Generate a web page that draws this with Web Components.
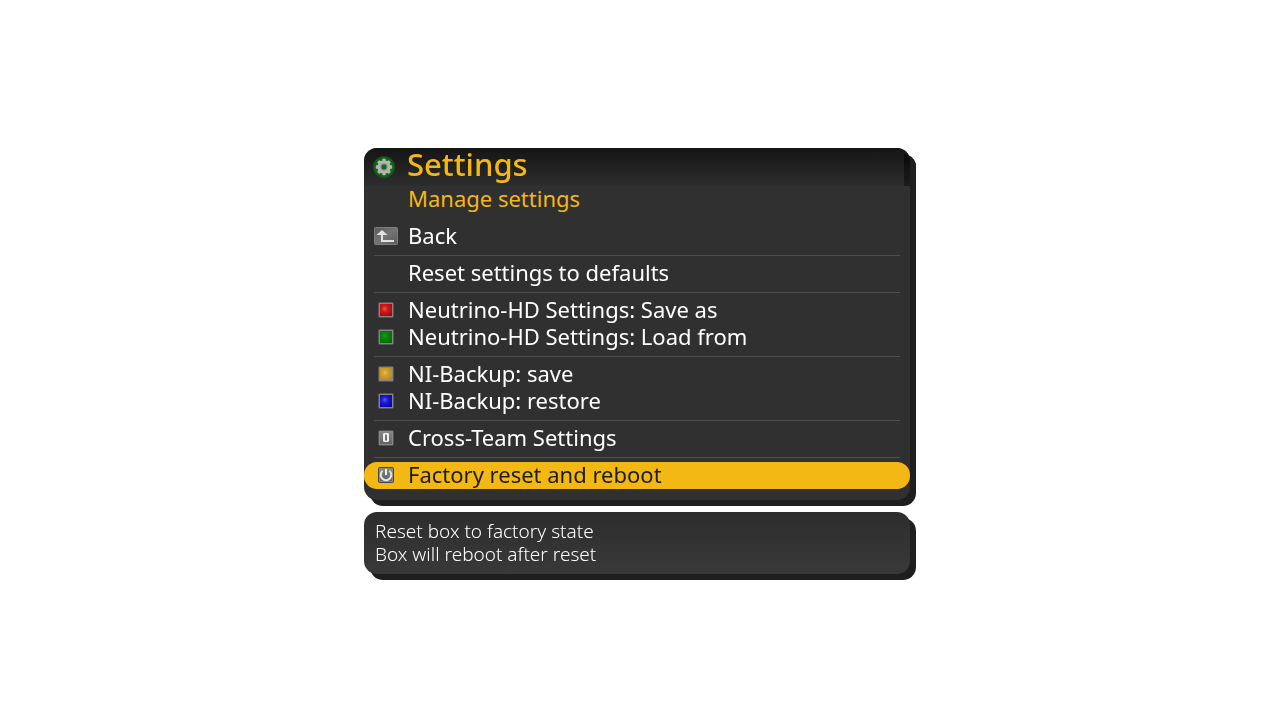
<!DOCTYPE html>
<html lang="en">
<head>
<meta charset="utf-8">
<meta name="viewport" content="width=device-width, initial-scale=1">
<title>Settings</title>
<style>
body{margin:0;background:#fff;font-family:"Noto Sans","Open Sans",sans-serif;color:#fff}
</style>
</head>
<body>
<osd-screen>
  <osd-menu heading="Settings" subheading="Manage settings">
    <osd-item icon="back">Back</osd-item>
    <osd-divider></osd-divider>
    <osd-item>Reset settings to defaults</osd-item>
    <osd-divider></osd-divider>
    <osd-item icon="red">Neutrino-HD Settings: Save as</osd-item>
    <osd-item icon="green">Neutrino-HD Settings: Load from</osd-item>
    <osd-divider></osd-divider>
    <osd-item icon="yellow">NI-Backup: save</osd-item>
    <osd-item icon="blue">NI-Backup: restore</osd-item>
    <osd-divider></osd-divider>
    <osd-item icon="zero">Cross-Team Settings</osd-item>
    <osd-divider></osd-divider>
    <osd-item icon="power" selected>Factory reset and reboot</osd-item>
  </osd-menu>
  <osd-hint>
    <p>Reset box to factory state</p>
    <p>Box will reboot after reset</p>
  </osd-hint>
</osd-screen>
<script>
const gearTeeth = [0, 45, 90, 135, 180, 225, 270, 315]
  .map(a => `<rect x="9.3" y="2.8" width="3.4" height="5" rx=".8" transform="rotate(${a} 11 11)"/>`).join('');

const colourKey = (light, mid, dark) => `<svg width="16" height="16" viewBox="0 0 16 16" aria-hidden="true">
  <defs><radialGradient id="g" cx=".4" cy=".4" r=".75"><stop offset="0" stop-color="${light}"/><stop offset=".35" stop-color="${mid}"/><stop offset="1" stop-color="${dark}"/></radialGradient></defs>
  <rect width="16" height="16" rx="2" fill="#55555a"/><rect x="1" y="1" width="14" height="14" fill="#848487"/>
  <rect x="2" y="2" width="12" height="12" fill="url(#g)"/></svg>`;

const greyKey = (edge, inner) => `<svg width="16" height="16" viewBox="0 0 16 16" aria-hidden="true">
  <defs><linearGradient id="k" x2="0" y2="1"><stop stop-color="#858585"/><stop offset="1" stop-color="#626262"/></linearGradient></defs>
  <rect width="16" height="16" rx="2" fill="${edge}"/><rect x="1" y="1" width="14" height="14" fill="#8a8a8a"/>
  <rect x="2" y="2" width="12" height="12" fill="url(#k)"/>${inner}</svg>`;

const icons = {
  gear: `<svg width="22" height="22" viewBox="0 0 22 22" aria-hidden="true">
    <circle cx="11" cy="11" r="10.8" fill="#145c18"/><circle cx="11" cy="11" r="9" fill="#0b6c0f"/>
    <g fill="#b4b4b4">${gearTeeth}<circle cx="11" cy="11" r="6.7"/></g>
    <circle cx="11" cy="11" r="3.4" fill="#6f8a70"/><circle cx="11" cy="11" r="2.4" fill="#176a1b"/></svg>`,
  back: `<svg width="24" height="18" viewBox="0 0 24 18" aria-hidden="true">
    <defs><linearGradient id="b" x2="1" y2="1"><stop stop-color="#5c5c5c"/><stop offset=".5" stop-color="#747474"/><stop offset="1" stop-color="#5c5c5c"/></linearGradient></defs>
    <rect width="24" height="18" rx="2" fill="#7d7d7d"/><rect x="1" y="1" width="22" height="16" fill="url(#b)"/>
    <path d="M8 3 2.5 8H7v7h13v-2H9V8h4.5z" fill="#e2e2e2"/></svg>`,
  red: colourKey('#f05050', '#cb1a1a', '#a00808'),
  green: colourKey('#1c9a1c', '#088408', '#006c00'),
  yellow: colourKey('#f0b830', '#d0a02a', '#b08428'),
  blue: colourKey('#5a5aec', '#1b1bd0', '#0000b4'),
  zero: greyKey('#505053', '<path fill-rule="evenodd" d="M6 3h4l1 1v7l-1 1H6l-1-1V4zM7 4.5v6h2v-6z" fill="#efefef"/>'),
  power: greyKey('#444449', '<path d="M4.6 3.8a5.3 5.3 0 1 0 6.8 0" fill="none" stroke="#e4e4e4" stroke-width="2"/><path d="M7 2h2v6H7z" fill="#f0f0f0"/>')
};

class OsdElement extends HTMLElement {
  connectedCallback() {
    if (this.shadowRoot) return;
    this.attachShadow({ mode: 'open' }).innerHTML = this.render();
  }
}

customElements.define('osd-screen', class extends OsdElement {
  render() {
    return `<style>
      :host{display:flex;align-items:center;justify-content:center;min-height:100vh;box-sizing:border-box;padding:8px 6px 6px 0}
      main{display:grid;gap:12px;width:100%;max-width:546px}
    </style><main><slot></slot></main>`;
  }
});

customElements.define('osd-menu', class extends OsdElement {
  render() {
    return `<style>
      :host{display:block;background:#303030;border-radius:13px;filter:drop-shadow(6px 6px 0 #1e1e1e);padding-bottom:11px}
      header{position:relative;display:flex;align-items:center;height:38px;padding-left:9px;gap:12px;
        border-radius:13px 13px 0 0;background:linear-gradient(#151515,#2d2d2d)}
      header::after{content:"";position:absolute;right:0;top:6px;bottom:0;width:6px;border-top-right-radius:6px;background:linear-gradient(#0a0a0a,#1c1c1c)}
      svg{display:block}
      h1{margin:0;font-size:31px;line-height:32px;font-weight:500;color:#f4b815;padding-bottom:6px}
      h2{margin:0 0 12px;padding-left:44px;font-size:22px;line-height:25px;font-weight:400;color:#f4b815}
    </style>
    <header>${icons.gear}<h1>${this.getAttribute('heading')}</h1></header>
    <h2>${this.getAttribute('subheading')}</h2>
    <nav aria-label="${this.getAttribute('heading')}"><slot></slot></nav>`;
  }
});

customElements.define('osd-item', class extends OsdElement {
  render() {
    return `<style>
      :host{display:block}
      button{display:grid;grid-template-columns:44px 1fr;align-items:center;width:100%;margin:0;padding:0 0 2px;border:0;
        border-radius:13px;background:none;color:inherit;font:400 22px/25px "Noto Sans","Open Sans",sans-serif;text-align:left;cursor:pointer}
      :host([selected]) button{background:#f4b815;color:#1c1c10}
      .icon{display:grid;place-items:center;height:25px}
      svg{display:block}
    </style>
    <button type="button"><span class="icon">${icons[this.getAttribute('icon')] || ''}</span><span><slot></slot></span></button>`;
  }
});

customElements.define('osd-divider', class extends OsdElement {
  render() {
    return `<style>:host{display:block}hr{margin:5px 10px 4px;border:0;height:1px;background:#505050}</style><hr>`;
  }
});

customElements.define('osd-hint', class extends OsdElement {
  render() {
    return `<style>
      :host{display:block;padding:8px 11px;border-radius:13px;background:linear-gradient(#2d2d2d,#393939);filter:drop-shadow(6px 6px 0 #1e1e1e)}
      ::slotted(p){margin:0;font-size:19px;line-height:23px;font-weight:300}
    </style><slot></slot>`;
  }
});
</script>
</body>
</html>
